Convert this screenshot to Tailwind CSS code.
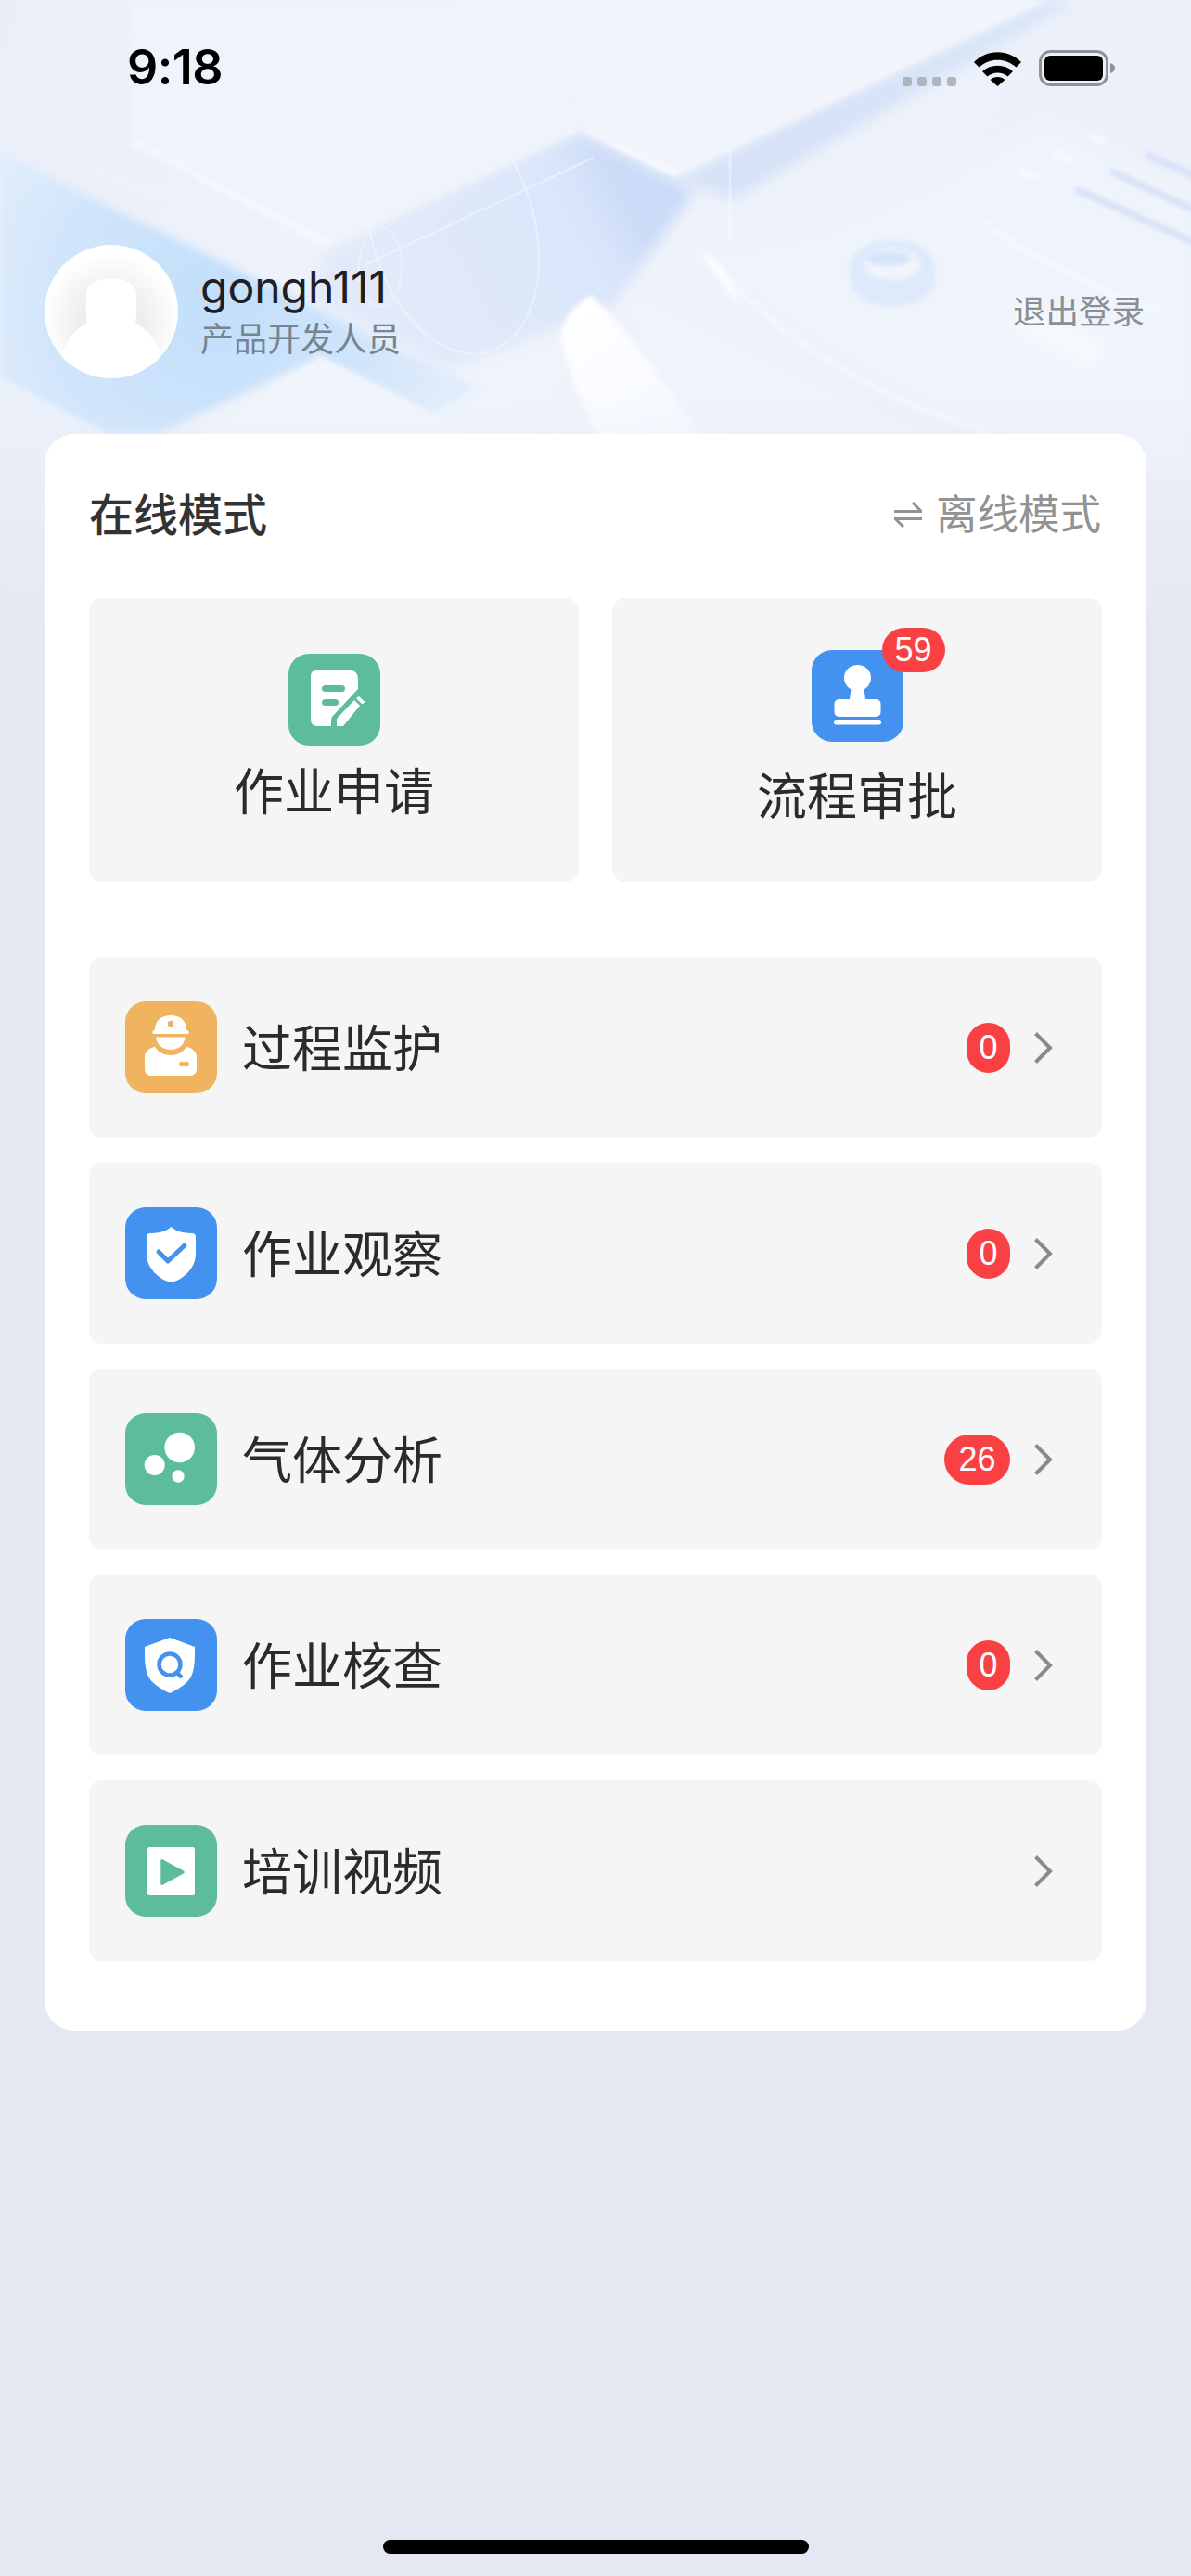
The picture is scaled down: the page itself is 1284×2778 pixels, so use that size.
<!DOCTYPE html>
<html lang="zh">
<head>
<meta charset="utf-8">
<script src="https://cdn.jsdelivr.net/npm/@tailwindcss/browser@4"></script>
</head>
<body class="m-0 bg-[#e4e8f2] font-['Noto_Sans_CJK_SC',sans-serif]">
<div class="relative w-[1284px] h-[2778px] overflow-hidden bg-[#e4e8f2]">

  <!-- decorative backdrop art -->
  <svg class="absolute left-0 top-0" width="1284" height="680" viewBox="0 0 1284 680" fill="none">
    <defs>
      <linearGradient id="base" x1="0" y1="0" x2="1" y2="0.2">
        <stop offset="0" stop-color="#e9eef9"/><stop offset="0.45" stop-color="#f0f4fb"/><stop offset="1" stop-color="#ebf0f9"/>
      </linearGradient>
      <radialGradient id="blue" gradientUnits="userSpaceOnUse" cx="230" cy="330" r="320">
        <stop offset="0" stop-color="#c2dffb"/><stop offset="0.5" stop-color="#cfe4fb"/><stop offset="1" stop-color="#e8f0fb"/>
      </radialGradient>
      <linearGradient id="midband" gradientUnits="userSpaceOnUse" x1="400" y1="270" x2="640" y2="140">
        <stop offset="0" stop-color="#e2eafa"/><stop offset="0.8" stop-color="#d9e5fa"/><stop offset="1" stop-color="#cbdbf7"/>
      </linearGradient>
      <linearGradient id="shadow" gradientUnits="userSpaceOnUse" x1="728" y1="190" x2="1130" y2="0">
        <stop offset="0" stop-color="#d6e1f7"/><stop offset="1" stop-color="#d6e3f8"/>
      </linearGradient>
      <linearGradient id="fade" x1="0" y1="0" x2="0" y2="1">
        <stop offset="0" stop-color="#e4e8f2" stop-opacity="0"/><stop offset="1" stop-color="#e4e8f2"/>
      </linearGradient>
      <linearGradient id="wedge" gradientUnits="userSpaceOnUse" x1="620" y1="330" x2="720" y2="468">
        <stop offset="0" stop-color="#ffffff"/><stop offset="1" stop-color="#f5f8fe"/>
      </linearGradient>
      <filter id="b1"><feGaussianBlur stdDeviation="2.5"/></filter>
      <filter id="b2"><feGaussianBlur stdDeviation="4"/></filter>
      <filter id="b4"><feGaussianBlur stdDeviation="8"/></filter>
    </defs>
    <rect width="1284" height="680" fill="url(#base)"/>

    <!-- left blue band -->
    <path d="M0 165 L520 420 L465 448 L345 385 L170 468 L110 468 L0 410 Z" fill="url(#blue)" filter="url(#b2)"/>
    <path d="M0 152 L355 268" stroke="#f0f5fd" stroke-width="5" opacity="0.4" filter="url(#b1)"/>
    <!-- middle band to upper right -->
    <path d="M355 266 L625 142 L750 205 L660 330 L480 400 L330 320 Z" fill="url(#midband)" filter="url(#b4)"/>
    <!-- upper-left sheet -->
    <path d="M142 150 L355 266 L628 140 L600 0 L140 0 Z" fill="#eff3fb" filter="url(#b1)"/>
    <path d="M142 152 L355 264" stroke="#f5f8fd" stroke-width="7" filter="url(#b1)"/>
    <!-- shadow under second sheet -->
    <path d="M728 192 L1130 0 L1160 0 L790 215 Z" fill="url(#shadow)" filter="url(#b4)"/>
    <!-- second sheet -->
    <path d="M628 142 L728 190 L1130 0 L720 0 Z" fill="#f1f5fb" filter="url(#b1)"/>
    <path d="M660 155 L728 187" stroke="#f8fbff" stroke-width="4" filter="url(#b1)"/>
    <!-- lower-left diamond -->
    <path d="M345 385 L465 445 L560 500 L170 500 Z" fill="#f1f5fb" filter="url(#b1)"/>
    <path d="M467 447 L518 421" stroke="#e8f4ff" stroke-width="7" filter="url(#b1)"/>
    <path d="M0 410 L110 468" stroke="#eef5fd" stroke-width="6" opacity="0.6" filter="url(#b1)"/>
    <!-- right big sheet -->
    <path d="M756 273 Q860 270 1010 195 L1130 130 L1284 200 L1284 520 L1100 480 Q900 410 756 273 Z" fill="#eff4fc" filter="url(#b4)"/>
    <path d="M770 285 Q880 410 1070 468" stroke="#f9fbff" stroke-width="3" filter="url(#b1)"/>
    <path d="M1055 235 Q1130 295 1250 335" stroke="#f9fbff" stroke-width="3" filter="url(#b1)"/>
    <!-- lower panel -->
    <path d="M684 320 L1000 470 L700 470 Z" fill="#f0f5fd" opacity="0.7" filter="url(#b1)"/>
    <!-- white wedge -->
    <path d="M637 318 Q604 340 605 365 Q610 400 650 480 L760 480 Q690 370 637 318 Z" fill="url(#wedge)" filter="url(#b1)"/>
    <path d="M756 273 Q778 275 798 330 L765 288 Z" fill="#ffffff" opacity="0.8" filter="url(#b1)"/>
    <!-- ring -->
    <ellipse cx="962" cy="302" rx="46" ry="29" fill="#dbe7fb" opacity="0.8" filter="url(#b1)"/>
    <ellipse cx="962" cy="288" rx="46" ry="30" fill="#deeafc" filter="url(#b1)"/>
    <ellipse cx="962" cy="285" rx="30" ry="16" fill="#f1f5fb" filter="url(#b1)"/>
    <ellipse cx="958" cy="279" rx="24" ry="8" fill="#d6e4fb" filter="url(#b1)"/>
    <!-- little tile behind logout -->
    <path d="M1100 325 L1190 368 L1180 400 L1090 355 Z" fill="#f8fcff" opacity="0.8" filter="url(#b4)"/>
    <!-- stripes -->
    <path d="M1162 205 L1284 260 M1200 186 L1284 225 M1238 168 L1284 188" stroke="#d6e0f8" stroke-width="7" stroke-linecap="round" filter="url(#b1)"/>
    <path d="M1100 183 L1115 191 M1138 165 L1152 172 M1176 147 L1190 153" stroke="#f7f9fe" stroke-width="6" stroke-linecap="round" filter="url(#b1)"/>
    <!-- thin guides -->
    <ellipse cx="488" cy="245" rx="88" ry="140" transform="rotate(-16 488 245)" stroke="#f4f7fd" stroke-width="2" opacity="0.55"/>
    <ellipse cx="410" cy="288" rx="23" ry="43" stroke="#f0f4fb" stroke-width="2" opacity="0.55"/>
    <path d="M395 285 L640 170" stroke="#f4f7fe" stroke-width="2" opacity="0.6"/>
    <path d="M787 0 V262" stroke="#f6f9fe" stroke-width="3" opacity="0.5"/>

    <rect y="430" width="1284" height="250" fill="url(#fade)"/>
  </svg>

  <div class="relative">
    <!-- status bar -->
    <div class="flex h-[146px] items-center justify-between pl-[137px] pr-[82px]">
      <span class="font-['Inter',sans-serif] text-[52px] font-semibold leading-none tracking-[-0.5px] text-black">9:18</span>
      <div class="flex items-end gap-[19px]">
        <div class="flex gap-[6px]">
          <span class="h-[10px] w-[10px] rounded-[3px] bg-[#aeb4c0]"></span>
          <span class="h-[10px] w-[10px] rounded-[3px] bg-[#aeb4c0]"></span>
          <span class="h-[10px] w-[10px] rounded-[3px] bg-[#aeb4c0]"></span>
          <span class="h-[10px] w-[10px] rounded-[3px] bg-[#aeb4c0]"></span>
        </div>
        <svg width="51" height="37" viewBox="0 0 51 37" fill="#000">
          <path d="M0 11 C14 -3.5 37 -3.5 51 11 L45.5 16.5 C34 6 17 6 5.5 16.5 Z"/>
          <path d="M9 21 C18 12.5 33 12.5 42 21 L36.5 26.5 C30 21 21 21 14.5 26.5 Z"/>
          <path d="M17.5 30 C22 26 29 26 33.5 30 L25.5 37 Z"/>
        </svg>
        <svg width="82" height="39" viewBox="0 0 82 39">
          <rect x="1.5" y="1.5" width="72" height="36" rx="11" fill="none" stroke="#8e9196" stroke-width="3"/>
          <rect x="6" y="6" width="63" height="27" rx="6" fill="#000"/>
          <path d="M77 14 C80.5 15 82 17 82 19.5 C82 22 80.5 24 77 25 Z" fill="#8e9196"/>
        </svg>
      </div>
    </div>

    <!-- profile -->
    <div class="mt-[118px] flex h-[144px] items-center pl-[48px] pr-[50px]">
      <svg class="shrink-0" width="144" height="144" viewBox="0 0 144 144">
        <defs>
          <radialGradient id="av" cx="50%" cy="58%" r="52%">
            <stop offset="0.45" stop-color="#eeeeee"/><stop offset="1" stop-color="#ffffff"/>
          </radialGradient>
          <clipPath id="avc"><circle cx="72" cy="72" r="72"/></clipPath>
        </defs>
        <circle cx="72" cy="72" r="72" fill="url(#av)"/>
        <g clip-path="url(#avc)" fill="#fff">
          <path d="M46 84 C44 72 45 60 45 54 C45 42 58 36 72 36 C86 36 99 42 99 54 C99 60 100 72 98 84 C112 92 122 104 127 124 L127 144 L17 144 L17 124 C22 104 32 92 46 84 Z"/>
        </g>
      </svg>
      <div class="ml-[24px] mt-[-8px] flex flex-1 flex-col">
        <span class="font-['Inter',sans-serif] text-[48px] leading-[56px] font-normal text-[#1e2023]">gongh111</span>
        <span class="mt-[5px] text-[36px] leading-[40px] text-[#76848f]">产品开发人员</span>
      </div>
      <span class="mt-[-5px] text-[35.5px] leading-[40px] text-[#8b8f94]">退出登录</span>
    </div>

    <!-- main card -->
    <div class="mx-[48px] mt-[60px] h-[1722px] rounded-[32px] bg-white px-[48px] pt-[57px]">
      <div class="flex h-[54px] items-center justify-between">
        <span class="text-[48px] font-medium leading-[54px] text-[#333333]">在线模式</span>
        <div class="flex items-center gap-[15px] pr-[1px]">
          <svg class="mt-[5px]" width="30" height="28" viewBox="0 0 30 28" fill="none" stroke="#929292" stroke-width="3">
            <path d="M0 10.5 H29 L20 1"/>
            <path d="M30 18.5 H1 L10 27"/>
          </svg>
          <span class="text-[44.5px] leading-[54px] text-[#929292]">离线模式</span>
        </div>
      </div>

      <div class="mt-[66px] grid grid-cols-2 gap-[36px]">
        <div class="flex h-[306px] flex-col items-center rounded-[14px] bg-[#f5f5f5] pt-[60px]">
          <span class="flex h-[99px] w-[99px] items-center justify-center rounded-[22px] bg-[#5dbd9a]">
            <svg width="99" height="99" viewBox="0 0 99 99" fill="#fff">
              <path d="M30 18 H66 Q75 18 75 27 V38 L47 68 Q46 70 46 72 V78 H31 Q24 78 24 71 V24 Q24 18 30 18 Z"/>
              <rect x="36" y="34" width="25" height="7" rx="3.5" fill="#5dbd9a"/>
              <rect x="36" y="49" width="18" height="7" rx="3.5" fill="#5dbd9a"/>
              <path d="M52 78 V70 L71 50 L77 56 L59 78 Z"/>
              <path d="M73 48 L76 46 L82.500 52 L79.500 54.500 Z"/>
            </svg>
          </span>
          <span class="mt-[17px] text-[54px] leading-[60px] text-[#2b2b2b]">作业申请</span>
        </div>
        <div class="flex h-[306px] flex-col items-center rounded-[14px] bg-[#f5f5f5] pt-[56px]">
          <span class="relative flex h-[99px] w-[99px] items-center justify-center rounded-[22px] bg-[#4492f0]">
            <svg width="99" height="99" viewBox="0 0 99 99" fill="#fff">
              <ellipse cx="49.500" cy="30" rx="14.500" ry="14"/>
              <path d="M43 38 H56 L58 53 H41 Z"/>
              <rect x="24.500" y="53" width="50" height="19" rx="5"/>
              <rect x="24" y="75" width="51" height="5.500" rx="2.500"/>
            </svg>
            <span class="absolute left-[76px] top-[-24px] flex h-[48px] w-[68px] items-center justify-center rounded-full bg-[#f94144] font-['Liberation_Sans',sans-serif] text-[36px] leading-none text-white">59</span>
          </span>
          <span class="mt-[26px] text-[54px] leading-[60px] text-[#2b2b2b]">流程审批</span>
        </div>
      </div>

      <div class="mt-[81px] flex flex-col gap-[27px]">
        <div class="flex h-[195px] items-center gap-[27px] rounded-[14px] bg-[#f5f5f5] pl-[39px] pr-[53px]">
          <span class="flex h-[99px] w-[99px] shrink-0 rounded-[22px] bg-[#f0b45e]">
            <svg width="99" height="99" viewBox="0 0 99 99" fill="#fff">
              <path d="M32 30 C32 20 40 15 49 15 C58 15 66 20 66 30 L69 33 L68 35 H30 L29 33 Z"/>
              <circle cx="49" cy="24" r="3.200" fill="#f0b45e"/>
              <path d="M33 38.500 H64.500 C64 47 57 52 49 52 C41 52 34 47 33 38.500 Z"/>
              <path d="M32 49 C36 55 42 58 49 58 C56 58 62 55 66 49 C72 50 77 54 77 60 V73 C77 77 74 80 70 80 H28 C24 80 21 77 21 73 V60 C21 54 26 50 32 49 Z"/>
              <rect x="58" y="65" width="11" height="5" rx="2.500" fill="#f0b45e"/>
            </svg>
          </span>
          <span class="mt-[-4px] flex-1 text-[54px] leading-[60px] text-[#2b2b2b]">过程监护</span>
          <span class="flex h-[54px] w-[47px] items-center justify-center rounded-full bg-[#f94144] font-['Liberation_Sans',sans-serif] text-[36px] leading-none text-white">0</span>
          <svg class="ml-[-1px]" width="20" height="34" viewBox="0 0 20 34" fill="none" stroke="#8a8a8a" stroke-width="4"><path d="M1.500 1.500 L17 17 L1.500 32.500"/></svg>
        </div>
        <div class="flex h-[195px] items-center gap-[27px] rounded-[14px] bg-[#f5f5f5] pl-[39px] pr-[53px]">
          <span class="flex h-[99px] w-[99px] shrink-0 rounded-[22px] bg-[#4492f0]">
            <svg width="99" height="99" viewBox="0 0 99 99" fill="#fff">
              <path d="M49.500 21 C53 24 58 28 72 28 Q76 28 76 32 V50 C76 66 62 78 49.500 81 C37 78 23 66 23 50 V32 Q23 28 27 28 C41 28 46 24 49.500 21 Z"/>
              <path d="M36 48 L46 58 L64 41" fill="none" stroke="#4492f0" stroke-width="5" stroke-linecap="round" stroke-linejoin="round"/>
            </svg>
          </span>
          <span class="mt-[-4px] flex-1 text-[54px] leading-[60px] text-[#2b2b2b]">作业观察</span>
          <span class="flex h-[54px] w-[47px] items-center justify-center rounded-full bg-[#f94144] font-['Liberation_Sans',sans-serif] text-[36px] leading-none text-white">0</span>
          <svg class="ml-[-1px]" width="20" height="34" viewBox="0 0 20 34" fill="none" stroke="#8a8a8a" stroke-width="4"><path d="M1.500 1.500 L17 17 L1.500 32.500"/></svg>
        </div>
        <div class="flex h-[195px] items-center gap-[27px] rounded-[14px] bg-[#f5f5f5] pl-[39px] pr-[53px]">
          <span class="flex h-[99px] w-[99px] shrink-0 rounded-[22px] bg-[#5dbd9a]">
            <svg width="99" height="99" viewBox="0 0 99 99" fill="#fff">
              <circle cx="58.700" cy="37" r="16.300"/>
              <circle cx="31.700" cy="56" r="11"/>
              <circle cx="57" cy="68" r="6.700"/>
            </svg>
          </span>
          <span class="mt-[-4px] flex-1 text-[54px] leading-[60px] text-[#2b2b2b]">气体分析</span>
          <span class="flex h-[54px] w-[71px] items-center justify-center rounded-full bg-[#f94144] font-['Liberation_Sans',sans-serif] text-[36px] leading-none text-white">26</span>
          <svg class="ml-[-1px]" width="20" height="34" viewBox="0 0 20 34" fill="none" stroke="#8a8a8a" stroke-width="4"><path d="M1.500 1.500 L17 17 L1.500 32.500"/></svg>
        </div>
        <div class="flex h-[195px] items-center gap-[27px] rounded-[14px] bg-[#f5f5f5] pl-[39px] pr-[53px]">
          <span class="flex h-[99px] w-[99px] shrink-0 rounded-[22px] bg-[#4492f0]">
            <svg width="99" height="99" viewBox="0 0 99 99" fill="#fff">
              <path d="M48 20 L75 30 C75 44 75 54 71 62 C67 70 56 76 48 80 C40 76 29 70 25 62 C21 54 21 44 21 30 Z"/>
              <circle cx="48" cy="49" r="11.500" fill="none" stroke="#4492f0" stroke-width="4.500"/>
              <path d="M55 57 L61 63" stroke="#4492f0" stroke-width="4.500"/>
            </svg>
          </span>
          <span class="mt-[-4px] flex-1 text-[54px] leading-[60px] text-[#2b2b2b]">作业核查</span>
          <span class="flex h-[54px] w-[47px] items-center justify-center rounded-full bg-[#f94144] font-['Liberation_Sans',sans-serif] text-[36px] leading-none text-white">0</span>
          <svg class="ml-[-1px]" width="20" height="34" viewBox="0 0 20 34" fill="none" stroke="#8a8a8a" stroke-width="4"><path d="M1.500 1.500 L17 17 L1.500 32.500"/></svg>
        </div>
        <div class="flex h-[195px] items-center gap-[27px] rounded-[14px] bg-[#f5f5f5] pl-[39px] pr-[53px]">
          <span class="flex h-[99px] w-[99px] shrink-0 rounded-[22px] bg-[#5dbd9a]">
            <svg width="99" height="99" viewBox="0 0 99 99" fill="#fff">
              <rect x="24" y="24" width="51" height="52" rx="2.500"/>
              <path d="M40 38 L62 50 Q64 51 62 52 L40 64 Q39 64.500 39 63 V39 Q39 37.500 40 38 Z" fill="#5dbd9a" stroke="#5dbd9a" stroke-width="1.500" stroke-linejoin="round"/>
            </svg>
          </span>
          <span class="mt-[-4px] flex-1 text-[54px] leading-[60px] text-[#2b2b2b]">培训视频</span>
          <svg class="ml-[-1px]" width="20" height="34" viewBox="0 0 20 34" fill="none" stroke="#8a8a8a" stroke-width="4"><path d="M1.500 1.500 L17 17 L1.500 32.500"/></svg>
        </div>
      </div>
    </div>

    <!-- home indicator -->
    <div class="mx-auto mt-[549px] h-[15px] w-[459px] rounded-full bg-black"></div>
  </div>
</div>
</body>
</html>
